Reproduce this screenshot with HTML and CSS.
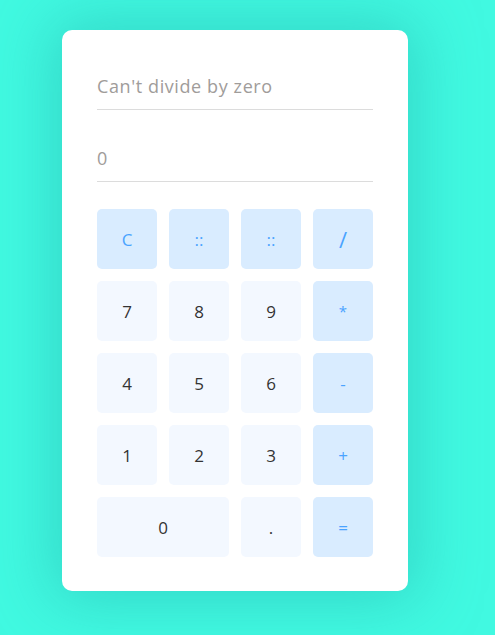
FILE: index.html
```html
<!DOCTYPE html>
<html>
<head>
<meta charset="utf-8">
<link rel="stylesheet" href="styles.css">
</head>
<body>
<div class="calc">
  <div class="field msg">Can't divide by zero</div>
  <div class="field val">0</div>
  <div class="keys">
    <div class="key op">C</div>
    <div class="key op">::</div>
    <div class="key op">::</div>
    <div class="key op slash">/</div>
    <div class="key">7</div>
    <div class="key">8</div>
    <div class="key">9</div>
    <div class="key op star">*</div>
    <div class="key">4</div>
    <div class="key">5</div>
    <div class="key">6</div>
    <div class="key op">-</div>
    <div class="key">1</div>
    <div class="key">2</div>
    <div class="key">3</div>
    <div class="key op">+</div>
    <div class="key zero">0</div>
    <div class="key">.</div>
    <div class="key op">=</div>
  </div>
</div>
</body>
</html>
```

FILE: styles.css
```css
html, body {
  margin: 0;
  padding: 0;
}
body {
  background: #41f9e1;
  width: 495px;
  height: 635px;
  overflow: hidden;
  font-family: "Open Sans", "DejaVu Sans", sans-serif;
}
.calc {
  margin: 30px 0 0 62px;
  width: 346px;
  height: 561px;
  box-sizing: border-box;
  padding: 35px 35px 34px;
  background: #fff;
  border-radius: 10px;
  box-shadow: 0 0 60px 10px rgba(40, 190, 180, 0.55);
}
.field {
  height: 45px;
  padding-bottom: 3px;
  border-bottom: 1px solid #dcdcdc;
  display: flex;
  align-items: center;
  color: #a09c9a;
  font-size: 18px;
  letter-spacing: 0.6px;
  box-sizing: border-box;
}
.val {
  margin-top: 27px;
}
.keys {
  margin-top: 27px;
  display: grid;
  grid-template-columns: repeat(4, 60px);
  grid-auto-rows: 60px;
  gap: 12px;
}
.key {
  background: #f3f8ff;
  border-radius: 5px;
  display: flex;
  align-items: center;
  justify-content: center;
  font-size: 17px;
  color: #333;
}
.key.op {
  background: #d9ecff;
  color: #4aa3ff;
}
.key.slash {
  font-size: 22px;
}
.key.star {
  font-size: 15px;
}
.zero {
  grid-column: span 2;
}
```
